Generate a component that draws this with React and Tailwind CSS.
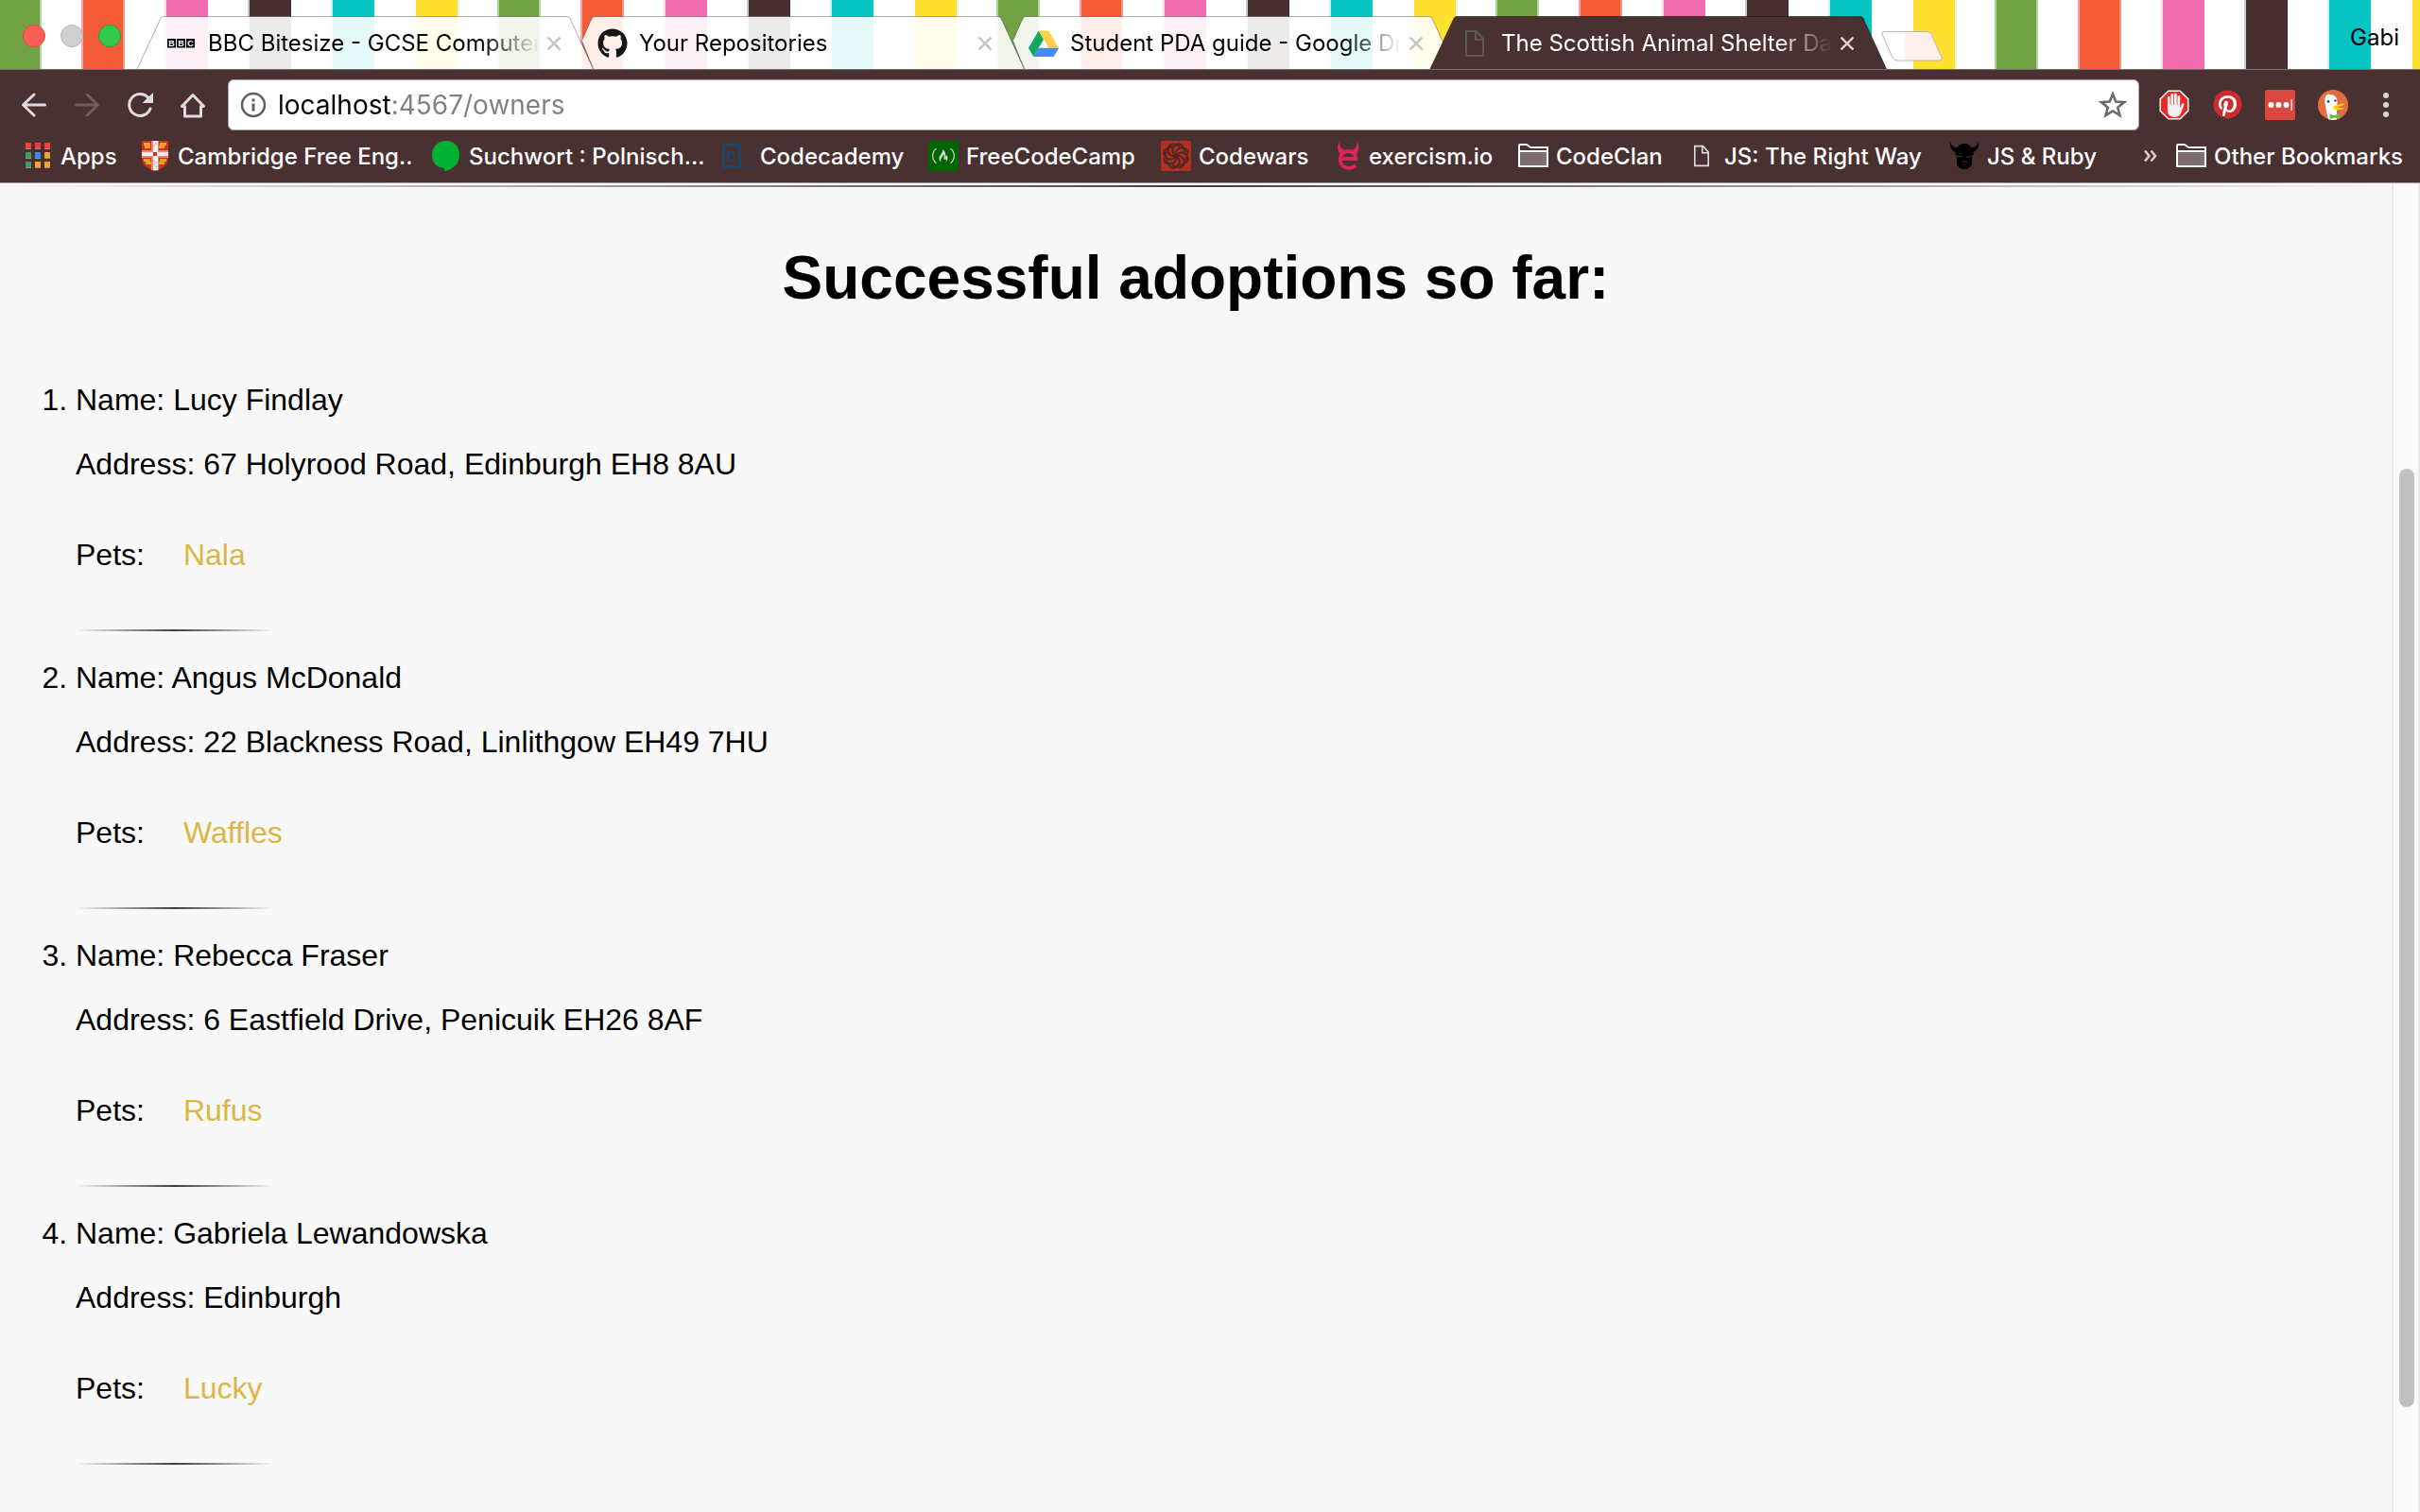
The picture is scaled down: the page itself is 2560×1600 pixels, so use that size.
import React from "react";
import { FaGithub, FaFreeCodeCamp, FaPinterest } from "react-icons/fa";

const STRIPES =
  "bg-[repeating-linear-gradient(to_right,#70a244_0px,#70a244_42px,#b5cfa0_42px,#b5cfa0_44px,#fff_44px,#fff_86px,#f9ab98_86px,#f9ab98_88px,#f35a38_88px,#f35a38_130px,#f9937b_130px,#f9937b_132px,#fff_132px,#fff_174px,#fbd3e6_174px,#fbd3e6_176px,#f26bac_176px,#f26bac_220px,#fff_220px,#fff_262px,#cfc8c9_262px,#cfc8c9_264px,#492e31_264px,#492e31_308px,#fff_308px,#fff_350px,#c0f0f0_350px,#c0f0f0_352px,#04c4c4_352px,#04c4c4_396px,#fff_396px,#fff_440px,#fee030_440px,#fee030_484px,#fff8d0_484px,#fff8d0_486px,#fff_486px,#fff_526px,#b5cfa0_526px,#b5cfa0_528px)]";

/* ---------- favicons ---------- */

function BbcIcon() {
  return (
    <svg viewBox="0 0 30 10" className="h-[10px] w-[30px]" aria-hidden="true">
      {["B", "B", "C"].map((c, i) => (
        <g key={i}>
          <rect x={i * 10} y="0" width="9" height="9.5" fill="#000" />
          <text x={i * 10 + 4.5} y="8" textAnchor="middle" fontSize="9" fontWeight="700" fill="#fff" fontFamily="Liberation Sans, sans-serif">
            {c}
          </text>
        </g>
      ))}
    </svg>
  );
}

function DriveIcon() {
  return (
    <svg viewBox="0 0 32 28" className="h-7 w-8" aria-hidden="true">
      <path d="M10.7 0.5 L16 9.8 L5.3 28 L0 18.8 Z" fill="#11a861" />
      <path d="M10.7 0.5 H21.3 L32 18.8 H21.3 Z" fill="#ffcf48" />
      <path d="M10.7 18.8 H32 L26.7 28 H5.3 Z" fill="#4688f4" />
    </svg>
  );
}

function PageIcon({ color, className }) {
  return (
    <svg viewBox="0 0 20 28" className={className} fill="none" stroke={color} strokeWidth="2" aria-hidden="true">
      <path d="M1 1 H12 L19 9 V27 H1 Z" />
      <path d="M11 1 V10 H19" />
    </svg>
  );
}

function AppsIcon() {
  const colors = ["#f9393b", "#f9393b", "#f9393b", "#3a9f5c", "#2d8cf0", "#f3a427", "#3a9f5c", "#f3a427", "#f3a427"];
  return (
    <svg viewBox="0 0 32 32" className="h-8 w-8" aria-hidden="true">
      {colors.map((c, i) => (
        <g key={i}>
          <rect x={3 + (i % 3) * 10} y={2 + Math.floor(i / 3) * 10} width="6" height="6" fill={c} />
          <rect x={3 + (i % 3) * 10} y={8 + Math.floor(i / 3) * 10} width="6" height="1" fill="#a08a8a" />
        </g>
      ))}
    </svg>
  );
}

function ShieldIcon() {
  return (
    <svg viewBox="0 0 32 32" className="h-8 w-8" aria-hidden="true">
      <path d="M2 0 H30 V20 Q29 28 16 32 Q3 28 2 20 Z" fill="#c9351c" />
      <g fill="#e9a227">
        <rect x="4" y="2" width="7" height="3" />
        <rect x="5" y="5" width="6" height="3" />
        <rect x="21" y="2" width="7" height="3" />
        <rect x="20" y="5" width="6" height="3" />
        <rect x="4" y="19" width="7" height="3" />
        <rect x="6" y="22" width="6" height="3" />
        <rect x="21" y="19" width="7" height="3" />
        <rect x="20" y="22" width="6" height="3" />
      </g>
      <path d="M12 0 H20 V31 L16 32 L12 31 Z M2 10 H30 V18 H2 Z" fill="#f47f70" />
      <path d="M14 0 H19 V31 H14 Z M2 12 H30 V16 H2 Z" fill="#f5f0f0" />
      <path d="M14 20h2v2h-2z M16 22h2v2h-2z M14 24h2v2h-2z M16 26h2v2h-2z M14 4h2v2h-2z M16 2h2v2h-2z" fill="#cfcaca" />
      <rect x="14" y="12" width="4" height="4" fill="#c9351c" />
    </svg>
  );
}

function BubbleIcon() {
  return (
    <svg viewBox="0 0 32 32" className="h-8 w-8" aria-hidden="true">
      <path d="M16 0 C25 0 30 6.500 30 15 C30 24 24 30.500 14 32 V29 C6 28.500 1 23 1 15 C1 6.500 7 0 16 0 Z" fill="#02b032" />
    </svg>
  );
}

function CodecademyIcon() {
  return (
    <svg viewBox="0 0 32 32" className="h-8 w-8" aria-hidden="true">
      <rect x="1.500" y="4.500" width="17" height="23" fill="none" stroke="#1f4560" strokeWidth="3" />
      <text x="10" y="22" textAnchor="middle" fontSize="19" fontWeight="700" fill="#1f4560" fontFamily="Inter, sans-serif">
        c
      </text>
      <rect x="24" y="26" width="8" height="2" fill="#1f4560" />
    </svg>
  );
}

function FccIcon() {
  return (
    <span className="flex size-8 items-center justify-center bg-[#006400]">
      <FaFreeCodeCamp className="size-6 text-[#c5dcc5]" aria-hidden="true" />
    </span>
  );
}

function CodewarsIcon() {
  return (
    <svg viewBox="0 0 32 32" className="size-8" aria-hidden="true">
      <rect width="32" height="32" rx="2" fill="#b1301f" />
      <g fill="none" stroke="#4f2724" strokeWidth="2" strokeLinecap="round">
        {[0, 45, 90, 135, 180, 225, 270, 315].map((a) => (
          <path key={a} transform={`rotate(${a} 16 16)`} d="M16 16 C15 11 18 7 22.500 7.500 C25 8 26 10 25.500 11.500 M17 3.500 C20 2.500 23.500 4.500 23.500 7.500" />
        ))}
      </g>
    </svg>
  );
}

function ExercismIcon() {
  return (
    <svg viewBox="0 0 32 32" className="h-8 w-8" aria-hidden="true">
      <path d="M8.500 1 C9 5.500 10.500 8 14 9.500 L9.500 14 C6.500 10.500 6.500 5 8.500 1 Z M28 1 C27.500 5.500 26 8 22.500 9.500 L27 14 C30 10.500 30 5 28 1 Z" fill="#dd2458" />
      <path d="M10 19 H26.500 C26 13.500 23 11 18.300 11 C13.500 11 9.800 14.500 9.800 20 C9.800 25.500 13.500 28.700 18.500 28.700 C21.500 28.700 24 28 26.300 26" fill="none" stroke="#dd2458" strokeWidth="3.800" />
    </svg>
  );
}

function FolderIcon() {
  return (
    <svg viewBox="0 0 32 32" className="h-8 w-8" fill="none" stroke="#fff" strokeWidth="2" strokeLinejoin="round" aria-hidden="true">
      <path d="M1 27 V5 Q1 4 2 4 H9 L13 7 H31 V27 Z" />
      <path d="M1 11 H31 V27 H1 Z" fill="#7f6e6f" />
    </svg>
  );
}

function VikingIcon() {
  return (
    <svg viewBox="0 0 32 32" className="h-8 w-8" aria-hidden="true">
      <path d="M1 1 C2 5 5 7 8.500 7 Q11 3 16 3 Q21 3 23.500 7 C27 7 30 5 31 1 C32 6 29.500 10.500 25.500 12 L26 15 H6 L6.500 12 C2.500 10.500 0 6 1 1 Z" fill="#000" />
      <path d="M8 15 H24 V25 Q22 30 16 30 Q10 30 8 25 Z" fill="#000" />
      <path d="M8 16.500 H14 M18 17 L23 16.500 M13 22.500 Q16 20.500 19 22.500 M14.500 25 H17.500" stroke="#493031" strokeWidth="1" fill="none" />
    </svg>
  );
}

/* ---------- toolbar icons ---------- */

function ArrowIcon({ color, flip }) {
  return (
    <svg viewBox="0 0 28 28" className={flip ? "size-7 rotate-180" : "size-7"} fill="none" stroke={color} strokeWidth="3" strokeLinecap="round" strokeLinejoin="round" aria-hidden="true">
      <path d="M14 3 L2.500 14 L14 25 M3 14 H25.500" />
    </svg>
  );
}

function ReloadIcon() {
  return (
    <svg viewBox="0 0 28 28" className="size-7" aria-hidden="true">
      <path d="M25 18 A11.500 11.500 0 1 1 22.500 6" fill="none" stroke="#e0dbdb" strokeWidth="3" strokeLinecap="round" />
      <path d="M28 1 V12 H16.500 Z" fill="#e0dbdb" />
    </svg>
  );
}

function HomeIcon() {
  return (
    <svg viewBox="0 0 28 28" className="size-7" fill="none" stroke="#e0dbdb" strokeWidth="3" strokeLinejoin="round" strokeLinecap="round" aria-hidden="true">
      <path d="M2.500 15.500 L14 3.500 L25.500 15.500 H22.500 V26 H5.500 V15.500 Z" />
    </svg>
  );
}

function StopHandIcon() {
  return (
    <svg viewBox="0 0 32 32" className="size-8" aria-hidden="true">
      <path d="M9.500 0.500 H22.500 L31.500 9.500 V22.500 L22.500 31.500 H9.500 L0.500 22.500 V9.500 Z" fill="#fff" />
      <path d="M10 2 H22 L30 10 V22 L22 30 H10 L2 22 V10 Z" fill="#e92a26" />
      <path d="M10.300 8.500 V20 M13.800 5.500 V18 M17.300 5 V18 M20.800 7.500 V20" stroke="#f1f1f1" strokeWidth="2.800" strokeLinecap="round" />
      <path d="M8.900 16 H22.200 V20 L24 15 Q26 13.500 26.500 15.500 L23 25 Q21 29 16.500 29 Q8.900 29 8.900 21 Z" fill="#f1f1f1" />
    </svg>
  );
}

function PinterestIcon() {
  return (
    <span className="flex size-8 items-center justify-center rounded-full bg-[radial-gradient(#fff_55%,transparent_56%)]">
      <FaPinterest className="size-[31px] text-[#cc2b2f]" aria-hidden="true" />
    </span>
  );
}

function DotsBarIcon() {
  return (
    <svg viewBox="0 0 32 32" className="size-8" aria-hidden="true">
      <rect width="32" height="32" rx="2" fill="#da4740" />
      <circle cx="6.500" cy="16" r="3" fill="#fff" />
      <circle cx="14.500" cy="16" r="3" fill="#fff" />
      <circle cx="22.500" cy="16" r="3" fill="#fff" />
      <rect x="27.500" y="10" width="1.500" height="12" fill="#f8dedd" />
    </svg>
  );
}

function DuckIcon() {
  return (
    <svg viewBox="0 0 32 32" className="size-8" aria-hidden="true">
      <circle cx="16" cy="16" r="16" fill="#e36c40" />
      <path d="M8 7 Q9 4 13 5 Q20 5.500 20.500 12 L20 20 L20 31.500 Q15 32.500 11 31 Q9 24 8 17 Q6.500 11 8 7 Z" fill="#fff" />
      <circle cx="11" cy="12.500" r="1.400" fill="#2d4f8e" />
      <circle cx="18.500" cy="11.500" r="1.200" fill="#2d4f8e" />
      <path d="M16 18 Q19 15.500 28 14.500 Q27 17 20.500 18.200 Q24 19.500 28 19 Q26 21.500 20 21.500 Q16 21 16 18 Z" fill="#fdd20a" />
      <path d="M12.500 25.500 L17 27 L23 25.500 V31 L18 29.500 L12.500 31 Z" fill="#67bd47" />
    </svg>
  );
}

/* ---------- tabs ---------- */

const TABS = [
  { title: "BBC Bitesize - GCSE Computer", icon: <BbcIcon />, path: "M0.5 74 L26 19.500 Q27 17.500 29 17.500 H456 Q458 17.500 459 19.500 L484 74" },
  { title: "Your Repositories", icon: <FaGithub className="size-8 text-[#181717]" aria-hidden="true" />, path: "M28 74 L15.500 43 L26 19.500 Q27 17.500 29 17.500 H456 Q458 17.500 459 19.500 L484 74" },
  { title: "Student PDA guide - Google Dr", icon: <DriveIcon />, path: "M28 74 L15.500 43 L26 19.500 Q27 17.500 29 17.500 H456 Q458 17.500 459 19.500 L484 74" },
  { title: "The Scottish Animal Shelter Da", icon: <PageIcon color="#5d5755" className="h-7 w-5" />, path: "M0.5 74 L26 19.500 Q27 17.500 29 17.500 H456 Q458 17.500 459 19.500 L484 74", active: true },
];

function Tab({ tab }) {
  return (
    <div role="tab" aria-selected={!!tab.active} className={`relative -mr-7 h-[74px] w-[484px] shrink-0 ${tab.active ? "z-10" : ""}`}>
      <svg viewBox="0 0 484 74" className="absolute inset-0 size-full" aria-hidden="true">
        <path
          d={tab.path}
          fill={tab.active ? "#493031" : "rgba(255,255,255,0.9)"}
          stroke={tab.active ? "rgba(40,15,18,0.6)" : "rgba(0,0,0,0.32)"}
          strokeWidth="1"
        />
      </svg>
      <div className="relative flex h-full items-center pt-[17px] pl-8">
        <span className="flex w-8 shrink-0 items-center justify-center">{tab.icon}</span>
        <button
          type="button"
          className={`ml-3 w-[354px] text-left text-[24px] leading-8 font-normal whitespace-nowrap [mask-image:linear-gradient(to_right,#000_82%,transparent_99%)] ${tab.active ? "text-white" : "text-black"}`}
        >
          {tab.title}
        </button>
        <button type="button" aria-label="Close tab" className="ml-[5px] flex size-[14px] items-center justify-center">
          <svg viewBox="0 0 14 14" className="size-[14px]" fill="none" stroke={tab.active ? "#d9d4d4" : "#c4c4c4"} strokeWidth="2.400" aria-hidden="true">
            <path d="M0.5 0.5 L13.500 13.500 M13.500 0.5 L0.5 13.500" />
          </svg>
        </button>
      </div>
    </div>
  );
}

const BOOKMARKS = [
  { label: "Apps", icon: <AppsIcon />, width: "w-[124px]" },
  { label: "Cambridge Free Eng..", icon: <ShieldIcon />, width: "w-[308px]" },
  { label: "Suchwort : Polnisch...", icon: <BubbleIcon />, width: "w-[308px]" },
  { label: "Codecademy", icon: <CodecademyIcon />, width: "w-[218px]" },
  { label: "FreeCodeCamp", icon: <FccIcon />, width: "w-[246px]" },
  { label: "Codewars", icon: <CodewarsIcon />, width: "w-[180px]" },
  { label: "exercism.io", icon: <ExercismIcon />, width: "w-[198px]" },
  { label: "CodeClan", icon: <FolderIcon />, width: "w-[178px]" },
  { label: "JS: The Right Way", icon: <PageIcon color="#e3dede" className="h-6 w-4" />, width: "w-[278px]" },
  { label: "JS & Ruby", icon: <VikingIcon />, width: "w-[170px]" },
];

function Bookmark({ item }) {
  return (
    <a href="#" className={`flex shrink-0 items-center gap-2 whitespace-nowrap ${item.width || ""}`}>
      <span className="flex size-8 shrink-0 items-center justify-center">{item.icon}</span>
      <span className="pt-px">{item.label}</span>
    </a>
  );
}

function Browser() {
  return (
    <header className="font-[Inter,sans-serif]">
      <div className={`flex h-[73px] items-start overflow-hidden ${STRIPES}`}>
        <div className="flex gap-4 pt-[26px] pl-6">
          <button type="button" aria-label="Close" className="size-6 rounded-full border border-[#e0443e] bg-[#ff5f58]" />
          <button type="button" aria-label="Minimize" className="size-6 rounded-full border border-[#b5b5b5] bg-[#d0d0d0]" />
          <button type="button" aria-label="Zoom" className="size-6 rounded-full border border-[#1fa436] bg-[#33c94a]" />
        </div>
        <div role="tablist" className="ml-4 flex">
          {TABS.map((t) => (
            <Tab key={t.title} tab={t} />
          ))}
        </div>
        <button type="button" aria-label="New tab" className="mt-8 ml-[21px]">
          <svg viewBox="0 0 68 34" className="h-[34px] w-[68px]" aria-hidden="true">
            <path d="M4 1.500 H50 Q53 1.500 54 4 L65 29 Q66 32 63 32 H18 Q14.500 32 13 29 L2 4 Q1 1.500 4 1.500 Z" fill="#fff" />
            <path d="M26 1.500 H50 Q53 1.500 54 4 L65 29 Q66 32 63 32 H26 Z" fill="#ffefed" />
            <path d="M4 1.500 H50 Q53 1.500 54 4 L65 29 Q66 32 63 32 H18 Q14.500 32 13 29 L2 4 Q1 1.500 4 1.500 Z" fill="none" stroke="#bdb6b0" />
          </svg>
        </button>
        <button type="button" className="mt-6 mr-[22px] ml-auto text-[24px] leading-8 text-black">
          Gabi
        </button>
      </div>

      <div className="border-b border-[#a39899] bg-[#493031]">
        <div className="flex h-[74px] items-center border-t border-[#7d6c6d] px-2">
          <button type="button" aria-label="Back" className="flex w-14 justify-center">
            <ArrowIcon color="#e0dbdb" />
          </button>
          <button type="button" aria-label="Forward" className="flex w-14 justify-center">
            <ArrowIcon color="#705c5d" flip />
          </button>
          <button type="button" aria-label="Reload" className="flex w-14 justify-center">
            <ReloadIcon />
          </button>
          <button type="button" aria-label="Home" className="flex w-14 justify-center">
            <HomeIcon />
          </button>
          <div className="mx-[9px] flex h-[54px] flex-1 items-center rounded-md border border-[#a9a2a2] bg-white px-3">
            <svg viewBox="0 0 28 28" className="size-7 shrink-0" fill="none" stroke="#5f5f5f" strokeWidth="2.500" aria-hidden="true">
              <circle cx="14" cy="14" r="12" />
              <path d="M14 12.500 V20.500 M14 7.500 V10.500" strokeWidth="3" />
            </svg>
            <input
              type="text"
              aria-label="Address"
              defaultValue="localhost:4567/owners"
              className="ml-3 flex-1 bg-[linear-gradient(to_right,#000_120px,#808080_120px)] bg-clip-text text-[28px] leading-9 text-transparent outline-none"
            />
            <button type="button" aria-label="Bookmark this page">
              <svg viewBox="0 0 30 30" className="size-[30px]" fill="none" stroke="#6b6b6b" strokeWidth="2.600" aria-hidden="true">
                <path d="M15 3.500 L18.200 11.600 L27 12.200 L20.200 17.700 L22.500 26.200 L15 21.500 L7.500 26.200 L9.800 17.700 L3 12.200 L11.800 11.600 Z" />
              </svg>
            </button>
          </div>
          <button type="button" aria-label="Ad blocker" className="flex w-14 justify-center">
            <StopHandIcon />
          </button>
          <button type="button" aria-label="Pinterest" className="flex w-14 justify-center">
            <PinterestIcon />
          </button>
          <button type="button" aria-label="Password manager" className="flex w-14 justify-center">
            <DotsBarIcon />
          </button>
          <button type="button" aria-label="Private search" className="flex w-14 justify-center">
            <DuckIcon />
          </button>
          <button type="button" aria-label="Menu" className="flex w-14 justify-center">
            <svg viewBox="0 0 6 28" className="h-7 w-[6px]" fill="#dcd6d6" aria-hidden="true">
              <circle cx="3" cy="4" r="3" />
              <circle cx="3" cy="14" r="3" />
              <circle cx="3" cy="24" r="3" />
            </svg>
          </button>
        </div>
        <nav aria-label="Bookmarks" className="flex h-[46px] items-center pr-[18px] pb-[10px] pl-6 text-[24px] leading-8 font-medium text-white">
          {BOOKMARKS.map((b) => (
            <Bookmark key={b.label} item={b} />
          ))}
          <div className="ml-auto flex items-center gap-5">
            <button type="button" aria-label="More bookmarks">
              <svg viewBox="0 0 14 14" className="size-[14px]" fill="none" stroke="#d6d0d0" strokeWidth="2.500" aria-hidden="true">
                <path d="M1 1.500 L5.500 7 L1 12.500 M7.500 1.500 L12 7 L7.500 12.500" />
              </svg>
            </button>
            <Bookmark item={{ label: "Other Bookmarks", icon: <FolderIcon /> }} />
          </div>
        </nav>
      </div>
    </header>
  );
}

const OWNERS = [
  { name: "Lucy Findlay", address: "67 Holyrood Road, Edinburgh EH8 8AU", pet: "Nala" },
  { name: "Angus McDonald", address: "22 Blackness Road, Linlithgow EH49 7HU", pet: "Waffles" },
  { name: "Rebecca Fraser", address: "6 Eastfield Drive, Penicuik EH26 8AF", pet: "Rufus" },
  { name: "Gabriela Lewandowska", address: "Edinburgh", pet: "Lucky" },
];

export default function App() {
  return (
    <div className="flex min-h-screen flex-col bg-[#f8f8f8]">
      <Browser />
      <div className="flex flex-1">
        <main className="flex-1 font-['Liberation_Sans',Arial,sans-serif] text-[32px] leading-9 text-black">
          <hr className="h-1 border-0 border-t-2 border-white bg-[linear-gradient(to_right,transparent,rgba(0,0,0,0.75),transparent)] bg-clip-padding" />
          <h1 className="mt-[60px] text-center text-[64px] leading-[72px] font-bold">Successful adoptions so far:</h1>
          <ol className="mt-[75px] list-decimal pl-20">
            {OWNERS.map((o) => (
              <li key={o.name} className="mb-[31px]">
                <p>Name: {o.name}</p>
                <p className="mt-8">Address: {o.address}</p>
                <p className="mt-[60px] flex gap-[41px]">
                  <span>Pets:</span>
                  <a href="#" className="text-[#dbb646]">
                    {o.pet}
                  </a>
                </p>
                <hr className="mt-[61px] h-[2px] w-[210px] border-0 bg-[linear-gradient(to_right,transparent,rgba(0,0,0,0.75),transparent)]" />
              </li>
            ))}
          </ol>
        </main>
        <div className="flex w-[30px] flex-col items-center border-x-2 border-[#e8e8e8] bg-[#fafafa] pl-[2px]" aria-hidden="true">
          <div className="flex-[302]" />
          <div className="w-4 flex-[992] rounded-full bg-[#c1c1c1]" />
          <div className="flex-[111]" />
        </div>
      </div>
    </div>
  );
}
